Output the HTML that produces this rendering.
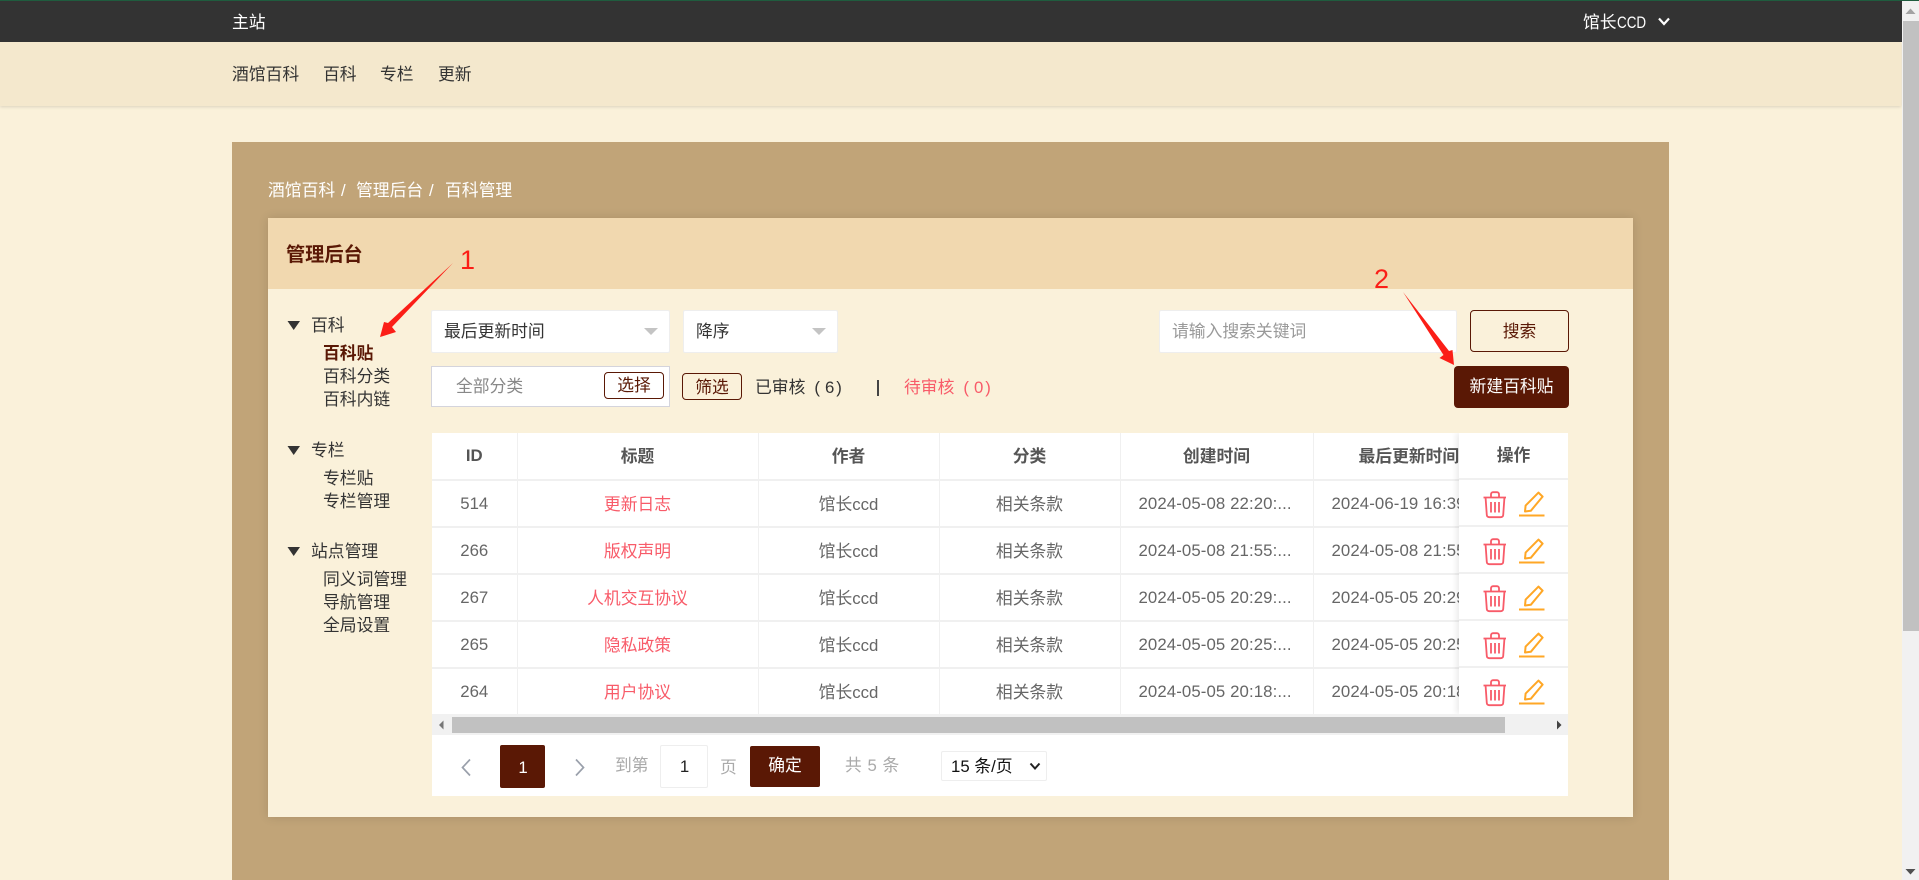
<!DOCTYPE html>
<html lang="zh-CN">
<head>
<meta charset="utf-8">
<title>管理后台</title>
<style>
*{box-sizing:border-box}
html,body{margin:0;padding:0}
body{width:1919px;height:880px;overflow:hidden;position:relative;background:#faf1da;font-family:"Liberation Sans","Noto Sans CJK SC",sans-serif;font-size:16.8px;color:#333}
.a{position:absolute}
.t{position:absolute;white-space:nowrap;line-height:24px;height:24px}
.white{background:#fff;border:1px solid #eee;border-radius:2px}
.tbl{position:absolute;left:432px;top:433px;width:1136px;height:281px;overflow:hidden;background:#fff}
table{border-collapse:collapse;table-layout:fixed;width:1135px;position:absolute;left:0;top:0}
th,td{text-align:center;overflow:hidden;white-space:nowrap;padding:0;border-right:1px solid #f0f0f0;border-bottom:2px solid #f0f0f0;height:47px;color:#666;font-weight:400}
th{font-weight:700;color:#555;padding-bottom:2px}
td.c{padding-bottom:2px}
tr:last-child td{border-bottom:0}
td.l{color:#f85b69;padding-bottom:2px}
td.d{text-align:left;padding-left:18px;text-overflow:clip;letter-spacing:.1px}
th.n{padding-bottom:0}
.fix{position:absolute;left:1027px;top:0;width:109px;height:281px;background:#fff;box-shadow:-3px 0 5px rgba(0,0,0,.07)}
.fix .h{height:47px;border-bottom:2px solid #f0f0f0;text-align:center;line-height:45px;font-weight:700;color:#555}
.fix .r{height:47px;border-bottom:2px solid #f0f0f0;position:relative}
.fix .r:last-child{border-bottom:0}
.fix svg{position:absolute}
</style>
</head>
<body>
<!-- top bar -->
<div class="a" style="left:0;top:0;width:1902px;height:42px;background:#333"></div>
<div class="a" style="left:0;top:0;width:1919px;height:1px;background:#1f5c3e"></div>
<div class="t" style="left:232px;top:11px;color:#fff">主站</div>
<div class="t" style="left:1583px;top:11px;color:#fff">馆长<span style="display:inline-block;transform:scaleX(.8);transform-origin:left center">CCD</span></div>
<svg class="a" style="left:1657px;top:16px" width="14" height="11" viewBox="0 0 14 11"><path d="M2 2.5 L7 8 L12 2.5" fill="none" stroke="#fff" stroke-width="2.2"/></svg>
<!-- nav -->
<div class="a" style="left:0;top:42px;width:1901px;height:64px;background:#f4e8cd;box-shadow:0 1px 3px rgba(0,0,0,.13)"></div>
<div class="t" style="left:232px;top:63px">酒馆百科</div>
<div class="t" style="left:323px;top:63px">百科</div>
<div class="t" style="left:380px;top:63px">专栏</div>
<div class="t" style="left:438px;top:63px">更新</div>
<!-- panel -->
<div class="a" style="left:232px;top:142px;width:1437px;height:738px;background:#c1a478"></div>
<div class="t" style="left:268px;top:179px;color:#fff">酒馆百科</div>
<div class="t" style="left:341px;top:179px;color:#fff">/</div>
<div class="t" style="left:356px;top:179px;color:#fff">管理后台</div>
<div class="t" style="left:429px;top:179px;color:#fff">/</div>
<div class="t" style="left:445px;top:179px;color:#fff">百科管理</div>
<!-- card -->
<div class="a" style="left:268px;top:218px;width:1365px;height:599px;background:#faf1da;box-shadow:0 0 10px rgba(0,0,0,.12)"></div>
<div class="a" style="left:268px;top:218px;width:1365px;height:71px;background:#f1d8af"></div>
<div class="t" style="left:286px;top:244px;font-size:19.2px;font-weight:700;color:#5a1805">管理后台</div>
<!-- sidebar -->
<svg class="a" style="left:287px;top:320px" width="14" height="11"><path d="M0.5 1H13L6.7 10Z" fill="#333"/></svg>
<div class="t" style="left:311px;top:314px">百科</div>
<div class="t" style="left:323px;top:342px;font-weight:700;color:#5a1805">百科贴</div>
<div class="t" style="left:323px;top:365px">百科分类</div>
<div class="t" style="left:323px;top:388px">百科内链</div>
<svg class="a" style="left:287px;top:445px" width="14" height="11"><path d="M0.5 1H13L6.7 10Z" fill="#333"/></svg>
<div class="t" style="left:311px;top:439px">专栏</div>
<div class="t" style="left:323px;top:467px">专栏贴</div>
<div class="t" style="left:323px;top:490px">专栏管理</div>
<svg class="a" style="left:287px;top:546px" width="14" height="11"><path d="M0.5 1H13L6.7 10Z" fill="#333"/></svg>
<div class="t" style="left:311px;top:540px">站点管理</div>
<div class="t" style="left:323px;top:568px">同义词管理</div>
<div class="t" style="left:323px;top:591px">导航管理</div>
<div class="t" style="left:323px;top:614px">全局设置</div>
<!-- filters -->
<div class="a white" style="left:431px;top:310px;width:239px;height:43px"></div>
<div class="t" style="left:444px;top:320px">最后更新时间</div>
<svg class="a" style="left:644px;top:328px" width="15" height="8"><path d="M0 0H14L7 7Z" fill="#c4c4c4"/></svg>
<div class="a white" style="left:683px;top:310px;width:155px;height:43px"></div>
<div class="t" style="left:696px;top:320px">降序</div>
<svg class="a" style="left:812px;top:328px" width="15" height="8"><path d="M0 0H14L7 7Z" fill="#c4c4c4"/></svg>
<div class="a" style="left:431px;top:366px;width:239px;height:41px;background:#fff;border:1px solid #d4d4dc"></div>
<div class="t" style="left:456px;top:375px;color:#888">全部分类</div>
<div class="a" style="left:604px;top:372px;width:60px;height:27px;border:1px solid #5a1805;border-radius:4px;text-align:center;line-height:26px;color:#5a1805">选择</div>
<div class="a" style="left:682px;top:373px;width:60px;height:27px;border:1px solid #5a1805;border-radius:4px;text-align:center;line-height:27px;color:#5a1805">筛选</div>
<div class="t" style="left:755px;top:376px">已审核<span style="margin-left:9px">(</span><span style="margin-left:5px">6</span><span style="margin-left:2px">)</span></div>
<div class="a" style="left:877px;top:380px;width:1.5px;height:16px;background:#444"></div>
<div class="t" style="left:904px;top:376px;color:#f85b69">待审核<span style="margin-left:9px">(</span><span style="margin-left:5px">0</span><span style="margin-left:2px">)</span></div>
<div class="a white" style="left:1159px;top:310px;width:298px;height:43px"></div>
<div class="t" style="left:1172px;top:320px;color:#999">请输入搜索关键词</div>
<div class="a" style="left:1470px;top:310px;width:99px;height:42px;border:1px solid #5a1805;border-radius:4px;text-align:center;line-height:42px;color:#5a1805">搜索</div>
<div class="a" style="left:1454px;top:366px;width:115px;height:42px;background:#5a1805;border-radius:4px;text-align:center;line-height:42px;color:#fff">新建百科贴</div>
<!-- table -->
<div class="tbl">
<table>
<colgroup><col style="width:85px"><col style="width:241px"><col style="width:181px"><col style="width:181px"><col style="width:193px"><col style="width:254px"></colgroup>
<tr><th class="n">ID</th><th>标题</th><th>作者</th><th>分类</th><th>创建时间</th><th style="text-align:left;padding-left:45px">最后更新时间</th></tr>
<tr><td>514</td><td class="l">更新日志</td><td class="c">馆长ccd</td><td class="c">相关条款</td><td class="d">2024-05-08 22:20:...</td><td class="d">2024-06-19 16:39:40</td></tr>
<tr><td>266</td><td class="l">版权声明</td><td class="c">馆长ccd</td><td class="c">相关条款</td><td class="d">2024-05-08 21:55:...</td><td class="d">2024-05-08 21:55:10</td></tr>
<tr><td>267</td><td class="l">人机交互协议</td><td class="c">馆长ccd</td><td class="c">相关条款</td><td class="d">2024-05-05 20:29:...</td><td class="d">2024-05-05 20:29:10</td></tr>
<tr><td>265</td><td class="l">隐私政策</td><td class="c">馆长ccd</td><td class="c">相关条款</td><td class="d">2024-05-05 20:25:...</td><td class="d">2024-05-05 20:25:10</td></tr>
<tr><td>264</td><td class="l">用户协议</td><td class="c">馆长ccd</td><td class="c">相关条款</td><td class="d">2024-05-05 20:18:...</td><td class="d">2024-05-05 20:18:10</td></tr>
</table>
<div class="fix">
<div class="h">操作</div>
<div class="r"><svg style="left:24px;top:11px" width="24" height="28" viewBox="0 0 24 28"><g fill="none" stroke="#f85b69" stroke-width="1.8"><path d="M0.5 6.5H23"/><path d="M8 6V3.2A2 2 0 0 1 10 1.2H14A2 2 0 0 1 16 3.2V6"/><path d="M2.6 7L3.8 24A2.4 2.4 0 0 0 6.2 26.2H17.8A2.4 2.4 0 0 0 20.2 24L21.4 7"/><path d="M8 11V21.5M12 11V21.5M16 11V21.5"/></g></svg><svg style="left:60px;top:11px" width="27" height="27" viewBox="0 0 27 27"><g fill="none" stroke="#ffa726" stroke-width="2"><path d="M6 20.5L6.6 14.6L19.5 1.6L23.6 5.6L11.8 19.8Z" stroke-linejoin="round"/><path d="M0 24.5H25.5"/></g></svg></div>
<div class="r"><svg style="left:24px;top:11px" width="24" height="28" viewBox="0 0 24 28"><g fill="none" stroke="#f85b69" stroke-width="1.8"><path d="M0.5 6.5H23"/><path d="M8 6V3.2A2 2 0 0 1 10 1.2H14A2 2 0 0 1 16 3.2V6"/><path d="M2.6 7L3.8 24A2.4 2.4 0 0 0 6.2 26.2H17.8A2.4 2.4 0 0 0 20.2 24L21.4 7"/><path d="M8 11V21.5M12 11V21.5M16 11V21.5"/></g></svg><svg style="left:60px;top:11px" width="27" height="27" viewBox="0 0 27 27"><g fill="none" stroke="#ffa726" stroke-width="2"><path d="M6 20.5L6.6 14.6L19.5 1.6L23.6 5.6L11.8 19.8Z" stroke-linejoin="round"/><path d="M0 24.5H25.5"/></g></svg></div>
<div class="r"><svg style="left:24px;top:11px" width="24" height="28" viewBox="0 0 24 28"><g fill="none" stroke="#f85b69" stroke-width="1.8"><path d="M0.5 6.5H23"/><path d="M8 6V3.2A2 2 0 0 1 10 1.2H14A2 2 0 0 1 16 3.2V6"/><path d="M2.6 7L3.8 24A2.4 2.4 0 0 0 6.2 26.2H17.8A2.4 2.4 0 0 0 20.2 24L21.4 7"/><path d="M8 11V21.5M12 11V21.5M16 11V21.5"/></g></svg><svg style="left:60px;top:11px" width="27" height="27" viewBox="0 0 27 27"><g fill="none" stroke="#ffa726" stroke-width="2"><path d="M6 20.5L6.6 14.6L19.5 1.6L23.6 5.6L11.8 19.8Z" stroke-linejoin="round"/><path d="M0 24.5H25.5"/></g></svg></div>
<div class="r"><svg style="left:24px;top:11px" width="24" height="28" viewBox="0 0 24 28"><g fill="none" stroke="#f85b69" stroke-width="1.8"><path d="M0.5 6.5H23"/><path d="M8 6V3.2A2 2 0 0 1 10 1.2H14A2 2 0 0 1 16 3.2V6"/><path d="M2.6 7L3.8 24A2.4 2.4 0 0 0 6.2 26.2H17.8A2.4 2.4 0 0 0 20.2 24L21.4 7"/><path d="M8 11V21.5M12 11V21.5M16 11V21.5"/></g></svg><svg style="left:60px;top:11px" width="27" height="27" viewBox="0 0 27 27"><g fill="none" stroke="#ffa726" stroke-width="2"><path d="M6 20.5L6.6 14.6L19.5 1.6L23.6 5.6L11.8 19.8Z" stroke-linejoin="round"/><path d="M0 24.5H25.5"/></g></svg></div>
<div class="r"><svg style="left:24px;top:11px" width="24" height="28" viewBox="0 0 24 28"><g fill="none" stroke="#f85b69" stroke-width="1.8"><path d="M0.5 6.5H23"/><path d="M8 6V3.2A2 2 0 0 1 10 1.2H14A2 2 0 0 1 16 3.2V6"/><path d="M2.6 7L3.8 24A2.4 2.4 0 0 0 6.2 26.2H17.8A2.4 2.4 0 0 0 20.2 24L21.4 7"/><path d="M8 11V21.5M12 11V21.5M16 11V21.5"/></g></svg><svg style="left:60px;top:11px" width="27" height="27" viewBox="0 0 27 27"><g fill="none" stroke="#ffa726" stroke-width="2"><path d="M6 20.5L6.6 14.6L19.5 1.6L23.6 5.6L11.8 19.8Z" stroke-linejoin="round"/><path d="M0 24.5H25.5"/></g></svg></div>
</div>
</div>
<!-- table scrollbar + pagination -->
<div class="a" style="left:432px;top:714px;width:1136px;height:21px;background:#f1f1f1"></div>
<div class="a" style="left:452px;top:717px;width:1053px;height:16px;background:#c1c1c1"></div>
<svg class="a" style="left:438px;top:720px" width="7" height="11"><path d="M5.5 0.5V9.5L1 5Z" fill="#777"/></svg>
<svg class="a" style="left:1556px;top:720px" width="7" height="11"><path d="M1 0.5V9.5L5.5 5Z" fill="#444"/></svg>
<div class="a" style="left:432px;top:735px;width:1136px;height:61px;background:#fff"></div>
<svg class="a" style="left:460px;top:758px" width="12" height="19"><path d="M10 1.5L2.5 9.5L10 17.5" fill="none" stroke="#9aa0ab" stroke-width="1.7"/></svg>
<div class="a" style="left:500px;top:745px;width:45px;height:43px;background:#5a1805;border-radius:2px;color:#fff;text-align:center;line-height:45px;padding-left:1px">1</div>
<svg class="a" style="left:574px;top:758px" width="12" height="19"><path d="M2 1.5L9.5 9.5L2 17.5" fill="none" stroke="#9aa0ab" stroke-width="1.7"/></svg>
<div class="t" style="left:615px;top:754px;color:#aaa">到第</div>
<div class="a white" style="left:660px;top:745px;width:48px;height:43px;text-align:center;line-height:41px;padding-left:1px;color:#222">1</div>
<div class="t" style="left:720px;top:756px;color:#aaa">页</div>
<div class="a" style="left:750px;top:746px;width:70px;height:41px;background:#5a1805;border-radius:2px;color:#fff;text-align:center;line-height:40px">确定</div>
<div class="t" style="left:845px;top:754px;color:#aaa;word-spacing:1px">共 5 条</div>
<div class="a white" style="left:941px;top:751px;width:106px;height:30px"></div>
<div class="t" style="left:951px;top:755px;color:#111">15 条/页</div>
<svg class="a" style="left:1029px;top:762px" width="12" height="9"><path d="M1.5 1.5L6 6.5L10.5 1.5" fill="none" stroke="#222" stroke-width="2"/></svg>
<!-- page scrollbar -->
<div class="a" style="left:1902px;top:1px;width:17px;height:879px;background:#f1f1f1"></div>
<div class="a" style="left:1903px;top:21px;width:16px;height:610px;background:#c1c1c1"></div>
<svg class="a" style="left:1905px;top:8px" width="11" height="7"><path d="M5.5 0.5L10.5 6H0.5Z" fill="#a3a3a3"/></svg>
<svg class="a" style="left:1905px;top:868px" width="11" height="7"><path d="M0.5 1H10.5L5.5 6.5Z" fill="#505050"/></svg>
<!-- annotations -->
<svg class="a" style="left:0;top:0;pointer-events:none" width="1919" height="880">
<polygon points="453,263 392,327 396,332 380,337 384,322 388,323" fill="#fb1e17"/>
<polygon points="1403,292 1449,351 1452.5,350 1454,365 1439.5,358 1443.5,355" fill="#fb1e17"/>
<text x="460" y="269" font-family="Liberation Sans" font-size="27" fill="#fb1e17">1</text>
<text x="1374" y="288" font-family="Liberation Sans" font-size="27" fill="#fb1e17">2</text>
</svg>
</body>
</html>
